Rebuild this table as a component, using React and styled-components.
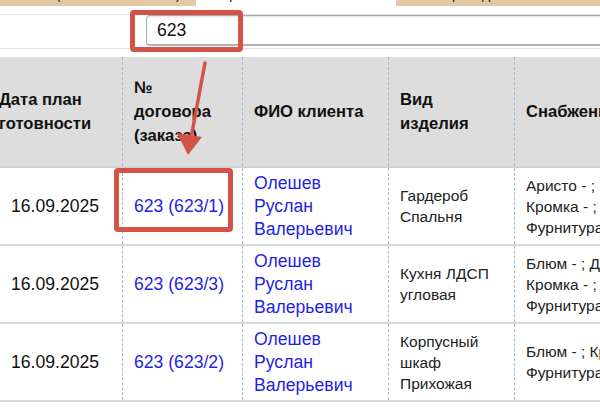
import styled, { createGlobalStyle } from "styled-components";

const GlobalStyle = createGlobalStyle`
  body {
    margin: 0;
    background: #fff;
  }
`;

const Page = styled.div`
  position: relative;
  width: 600px;
  height: 416px;
  overflow: hidden;
  background: #fff;
  font-family: "Liberation Sans", Arial, sans-serif;
  color: #111;
`;

const TabBar = styled.div`
  display: flex;
  height: 6px;
  overflow: hidden;
`;

const Tab = styled.div`
  box-sizing: border-box;
  flex: 0 0 ${(p) => p.$width}px;
  background: ${(p) => (p.$active ? "#fff" : "#e2c9a3")};
  padding-left: ${(p) => p.$pad}px;
  font-size: 14px;
  line-height: 14px;
  white-space: nowrap;
  color: #1b1b3a;
`;

const TabText = styled.div`
  margin-top: -13px;
`;

const FilterRow = styled.div`
  margin-top: 8px;
  height: 33px;
  padding-left: 146px;
  border-top: 1px solid #e3e3e3;
  border-bottom: 1px solid #e3e3e3;
`;

const SearchInput = styled.input`
  display: block;
  box-sizing: border-box;
  width: 520px;
  height: 31px;
  margin: 0;
  padding: 0 10px;
  border: 1px solid #b4b4b4;
  border-top-color: #a8a8a8;
  border-bottom: 2px solid #b0b0b0;
  border-radius: 4px;
  box-shadow: inset 0 1px 2px rgba(0, 0, 0, 0.12);
  font-family: "Liberation Sans", Arial, sans-serif;
  font-size: 17.6px;
  color: #111;
  outline: none;
`;

const Table = styled.div`
  margin-top: 8px;
  margin-left: -12px;
  width: 820px;
`;

const cols = "134px 120px 146px 126px 292px";

const HeadRow = styled.div`
  display: grid;
  grid-template-columns: ${cols};
  height: 109px;
  background: #dddddd;
  border-bottom: 2px solid #ccd2d8;
`;

const HeadCell = styled.div`
  display: flex;
  align-items: center;
  padding: 0 11px;
  font-weight: bold;
  font-size: 16.6px;
  line-height: 24px;
  color: #111;
  border-left: ${(p) => (p.$first ? "none" : "1px dashed #aab7c3")};
`;

const Row = styled.div`
  display: grid;
  grid-template-columns: ${cols};
  height: 76px;
  border-bottom: 2px solid #d4d8dc;
`;

const Cell = styled.div`
  display: flex;
  align-items: center;
  justify-content: ${(p) => (p.$center ? "center" : "flex-start")};
  padding: 0 11px;
  border-left: ${(p) => (p.$first ? "none" : "1px dashed #aab7c3")};
  overflow: hidden;
`;

const DateText = styled.span`
  font-size: 17.6px;
  color: #111;
`;

const Link = styled.a`
  font-size: 17.6px;
  line-height: 23px;
  color: #1f1fe6;
  text-decoration: none;
`;

const Plain = styled.div`
  font-size: 15.5px;
  line-height: 21px;
  color: #222;
`;

const Line = styled.div`
  white-space: nowrap;
`;

const Callout = styled.div`
  position: absolute;
  left: ${(p) => p.$x}px;
  top: ${(p) => p.$y}px;
  width: ${(p) => p.$w}px;
  height: ${(p) => p.$h}px;
  box-sizing: border-box;
  border: 5px solid #d35446;
  border-radius: 4px;
  pointer-events: none;
`;

const Arrow = styled.svg`
  position: absolute;
  left: 0;
  top: 0;
  pointer-events: none;
`;

const rows = [
  {
    date: "16.09.2025",
    num: "623 (623/1)",
    name: "Олешев Руслан Валерьевич",
    item: "Гардероб Спальня",
    supply: ["Аристо - ;", "Кромка - ; Стекло - ;", "Фурнитура - ;"],
  },
  {
    date: "16.09.2025",
    num: "623 (623/3)",
    name: "Олешев Руслан Валерьевич",
    item: "Кухня ЛДСП угловая",
    supply: ["Блюм - ; ДСП - ;", "Кромка - ; Стекло - ;", "Фурнитура - ;"],
  },
  {
    date: "16.09.2025",
    num: "623 (623/2)",
    name: "Олешев Руслан Валерьевич",
    item: "Корпусный шкаф Прихожая",
    supply: ["Блюм - ; Кромка - ;", "Фурнитура - ;"],
  },
];

export default function App() {
  return (
    <Page>
      <GlobalStyle />
      <TabBar>
        <Tab $width={196} $pad={5}>
          <TabText>Заказы (все новые заказы)</TabText>
        </Tab>
        <Tab $width={200} $pad={24} $active>
          <TabText>Архив</TabText>
        </Tab>
        <Tab $width={204} $pad={46}>
          <TabText>Приход</TabText>
        </Tab>
      </TabBar>

      <FilterRow>
        <SearchInput defaultValue="623" />
      </FilterRow>

      <Table>
        <HeadRow>
          <HeadCell $first>Дата план готовности</HeadCell>
          <HeadCell>№ договора (заказа)</HeadCell>
          <HeadCell>ФИО клиента</HeadCell>
          <HeadCell>Вид изделия</HeadCell>
          <HeadCell>Снабжение</HeadCell>
        </HeadRow>
        {rows.map((r) => (
          <Row key={r.num}>
            <Cell $first $center>
              <DateText>{r.date}</DateText>
            </Cell>
            <Cell>
              <Link href="#">{r.num}</Link>
            </Cell>
            <Cell>
              <Link href="#">{r.name}</Link>
            </Cell>
            <Cell>
              <Plain>{r.item}</Plain>
            </Cell>
            <Cell>
              <Plain>
                {r.supply.map((s) => (
                  <Line key={s}>{s}</Line>
                ))}
              </Plain>
            </Cell>
          </Row>
        ))}
      </Table>

      <Callout $x={130} $y={10} $w={113} $h={42} />
      <Callout $x={114} $y={168} $w={119} $h={64} />
      <Arrow width="600" height="416" viewBox="0 0 600 416">
        <line x1="205" y1="63" x2="191" y2="138" stroke="#d35446" strokeWidth="3.5" strokeLinecap="round" />
        <polygon points="188,155 177,133 202,137" fill="#d35446" />
      </Arrow>
    </Page>
  );
}
